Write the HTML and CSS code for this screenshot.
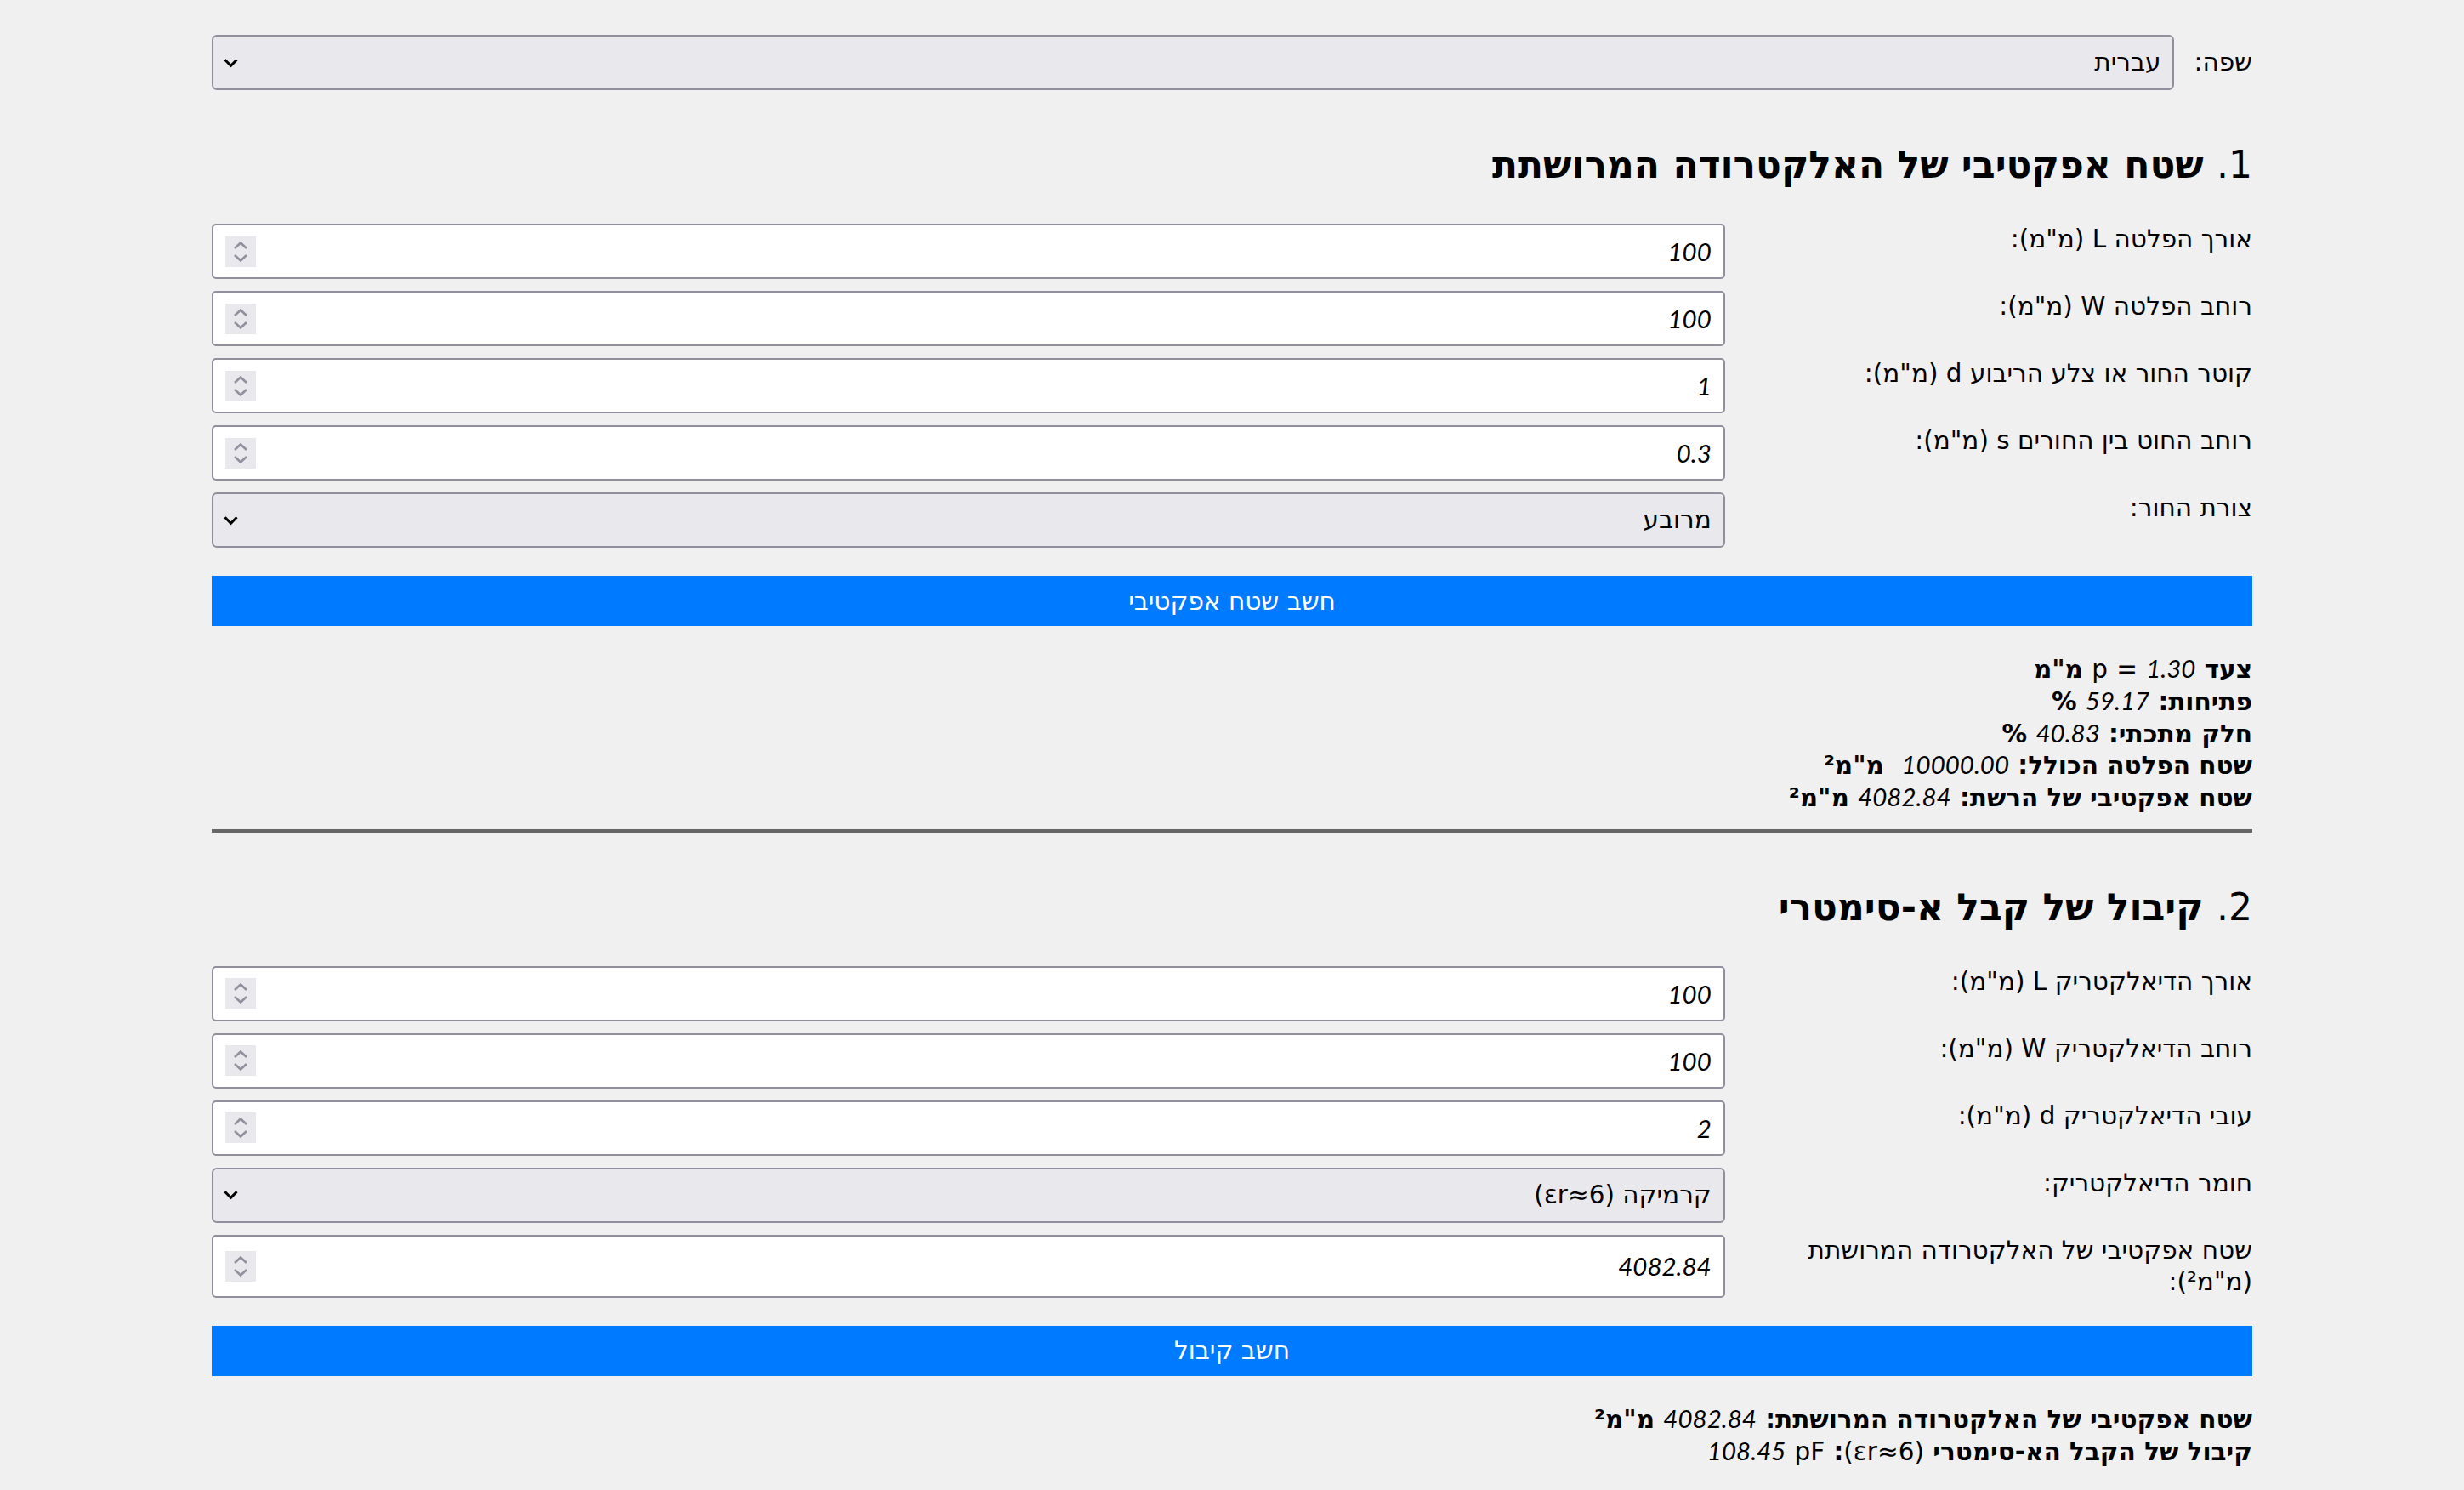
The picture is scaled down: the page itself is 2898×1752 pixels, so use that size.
FILE: index.html
```html
<!DOCTYPE html>
<html lang="he" dir="rtl">
<head>
<meta charset="utf-8">
<title>מחשבון אלקטרודה מרושתת</title>
<link rel="stylesheet" href="styles.css">
</head>
<body>
<main class="page">
  <div class="lang-row">
    <label class="lang-label" for="lang">שפה:</label>
    <div class="select-wrap">
      <select id="lang" class="select"><option>עברית</option></select>
      <svg class="chev" width="17" height="11" viewBox="0 0 17 11"><path d="M1.5 1.8 L8.5 8.8 L15.5 1.8"/></svg>
    </div>
  </div>

  <section class="block">
    <h2 class="title"><span class="idx">1.</span> שטח אפקטיבי של האלקטרודה המרושתת</h2>
    <div class="row">
      <label class="label">אורך הפלטה L (מ"מ):</label>
      <div class="field"><input class="num-input" type="number" value="100"><span class="spin"><svg width="36" height="36" viewBox="0 0 36 36"><path d="M11 14 L18 7.5 L25 14"/><path d="M11 22 L18 28.5 L25 22"/></svg></span></div>
    </div>
    <div class="row">
      <label class="label">רוחב הפלטה W (מ"מ):</label>
      <div class="field"><input class="num-input" type="number" value="100"><span class="spin"><svg width="36" height="36" viewBox="0 0 36 36"><path d="M11 14 L18 7.5 L25 14"/><path d="M11 22 L18 28.5 L25 22"/></svg></span></div>
    </div>
    <div class="row">
      <label class="label">קוטר החור או צלע הריבוע d (מ"מ):</label>
      <div class="field"><input class="num-input" type="number" value="1"><span class="spin"><svg width="36" height="36" viewBox="0 0 36 36"><path d="M11 14 L18 7.5 L25 14"/><path d="M11 22 L18 28.5 L25 22"/></svg></span></div>
    </div>
    <div class="row">
      <label class="label">רוחב החוט בין החורים s (מ"מ):</label>
      <div class="field"><input class="num-input" type="number" value="0.3"><span class="spin"><svg width="36" height="36" viewBox="0 0 36 36"><path d="M11 14 L18 7.5 L25 14"/><path d="M11 22 L18 28.5 L25 22"/></svg></span></div>
    </div>
    <div class="row">
      <label class="label">צורת החור:</label>
      <div class="select-wrap">
        <select class="select"><option>מרובע</option></select>
        <svg class="chev" width="17" height="11" viewBox="0 0 17 11"><path d="M1.5 1.8 L8.5 8.8 L15.5 1.8"/></svg>
      </div>
    </div>
    <button class="calc">חשב שטח אפקטיבי</button>
    <div class="results">
      <div>צעד <span class="lat">p</span> = <span class="num">1.30</span> מ"מ</div>
      <div>פתיחות: <span class="num">59.17</span> %</div>
      <div>חלק מתכתי: <span class="num">40.83</span> %</div>
      <div>שטח הפלטה הכולל: <span class="num">10000.00</span>&nbsp; מ"מ²</div>
      <div>שטח אפקטיבי של הרשת: <span class="num">4082.84</span> מ"מ²</div>
    </div>
  </section>

  <hr class="divider">

  <section class="block">
    <h2 class="title"><span class="idx">2.</span> קיבול של קבל א-סימטרי</h2>
    <div class="row">
      <label class="label">אורך הדיאלקטריק L (מ"מ):</label>
      <div class="field"><input class="num-input" type="number" value="100"><span class="spin"><svg width="36" height="36" viewBox="0 0 36 36"><path d="M11 14 L18 7.5 L25 14"/><path d="M11 22 L18 28.5 L25 22"/></svg></span></div>
    </div>
    <div class="row">
      <label class="label">רוחב הדיאלקטריק W (מ"מ):</label>
      <div class="field"><input class="num-input" type="number" value="100"><span class="spin"><svg width="36" height="36" viewBox="0 0 36 36"><path d="M11 14 L18 7.5 L25 14"/><path d="M11 22 L18 28.5 L25 22"/></svg></span></div>
    </div>
    <div class="row">
      <label class="label">עובי הדיאלקטריק d (מ"מ):</label>
      <div class="field"><input class="num-input" type="number" value="2"><span class="spin"><svg width="36" height="36" viewBox="0 0 36 36"><path d="M11 14 L18 7.5 L25 14"/><path d="M11 22 L18 28.5 L25 22"/></svg></span></div>
    </div>
    <div class="row">
      <label class="label">חומר הדיאלקטריק:</label>
      <div class="select-wrap">
        <select class="select"><option>קרמיקה (εr≈6)</option></select>
        <svg class="chev" width="17" height="11" viewBox="0 0 17 11"><path d="M1.5 1.8 L8.5 8.8 L15.5 1.8"/></svg>
      </div>
    </div>
    <div class="row">
      <label class="label">שטח אפקטיבי של האלקטרודה המרושתת (מ"מ²):</label>
      <div class="field"><input class="num-input" type="number" value="4082.84"><span class="spin"><svg width="36" height="36" viewBox="0 0 36 36"><path d="M11 14 L18 7.5 L25 14"/><path d="M11 22 L18 28.5 L25 22"/></svg></span></div>
    </div>
    <button class="calc">חשב קיבול</button>
    <div class="results">
      <div>שטח אפקטיבי של האלקטרודה המרושתת: <span class="num">4082.84</span> מ"מ²</div>
      <div>קיבול של הקבל הא-סימטרי <span class="lat">(εr≈6)</span>: <span class="num">108.45</span> <span class="lat">pF</span></div>
    </div>
  </section>
</main>
</body>
</html>
```

FILE: styles.css
```css
html, body {
  margin: 0;
  padding: 0;
}

body {
  background: #f0f0f0;
  color: #000;
  font-family: "DejaVu Sans", sans-serif;
  font-size: 29.5px;
  line-height: 37px;
}

.page {
  max-width: 2400px;
  margin: 0 auto;
  padding: 41px 0 40px;
}

.lang-row {
  display: flex;
  align-items: center;
  gap: 23px;
}

.lang-label {
  flex: none;
}

.lang-row .select-wrap {
  flex: 1;
  height: 65px;
}

.select-wrap {
  position: relative;
  display: flex;
}

.select {
  flex: 1;
  -webkit-appearance: none;
  appearance: none;
  margin: 0;
  min-height: 65px;
  box-sizing: border-box;
  background: #e9e9ed;
  border: 2px solid #8f8f9d;
  border-radius: 6px;
  padding: 0 14px;
  font: inherit;
  color: #000;
  text-align: right;
}

.chev {
  position: absolute;
  left: 14px;
  top: 50%;
  transform: translateY(-50%);
  pointer-events: none;
}

.chev path {
  fill: none;
  stroke: #000;
  stroke-width: 3;
}

.title {
  font-size: 44px;
  line-height: 51px;
  font-weight: bold;
  margin: 62px 0 44px;
}

.idx {
  font-weight: normal;
}

.row {
  display: grid;
  grid-template-columns: 1fr 3fr;
  column-gap: 27px;
  margin-bottom: 14px;
}

.label {
  align-self: start;
  line-height: 37px;
}

.field {
  display: flex;
  align-items: center;
  min-height: 65px;
  box-sizing: border-box;
  background: #fff;
  border: 2px solid #8f8f9d;
  border-radius: 5px;
  padding: 0 14px;
}

.num-input {
  flex: 1;
  min-width: 0;
  border: 0;
  outline: 0;
  background: transparent;
  padding: 0;
  margin: 0 0 0 14px;
  font-family: "Liberation Sans Narrow", "Lato", sans-serif;
  font-style: italic;
  font-size: 29.5px;
  color: #000;
  text-align: right;
  -moz-appearance: textfield;
}

.num-input::-webkit-inner-spin-button,
.num-input::-webkit-outer-spin-button {
  -webkit-appearance: none;
  margin: 0;
}

.spin {
  flex: none;
  width: 36px;
  height: 36px;
  background: #e9e9ed;
  display: flex;
}

.spin path {
  fill: none;
  stroke: #8f8f9d;
  stroke-width: 2.6;
}

.calc {
  display: block;
  width: 100%;
  height: 59px;
  margin: 33px 0 0;
  border: 0;
  border-radius: 0;
  background: #007bff;
  color: #fff;
  font-family: "DejaVu Sans", sans-serif;
  font-size: 29.5px;
  padding: 0;
}

.results {
  margin-top: 33px;
  font-weight: bold;
  line-height: 37.8px;
}

.num {
  font-family: "Lato", sans-serif;
  font-style: italic;
  font-weight: normal;
  line-height: 1;
}

.lat {
  font-weight: normal;
}

.divider {
  border: 0;
  height: 4px;
  background: #666;
  margin: 17px 0 0;
}
```
